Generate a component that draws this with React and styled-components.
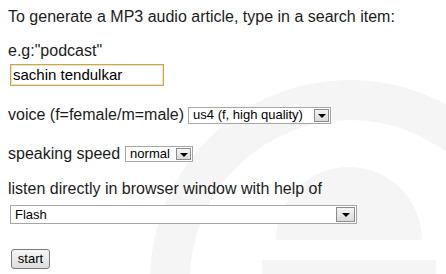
import React from "react";
import styled, { createGlobalStyle } from "styled-components";

const Global = createGlobalStyle`
  html, body { margin: 0; padding: 0; background: #fff; }
  body { width: 446px; height: 274px; overflow: hidden; }
`;

const Page = styled.div`
  position: relative;
  width: 446px;
  height: 274px;
  overflow: hidden;
  background: #ffffff;
  font-family: "Liberation Sans", Arial, sans-serif;
  color: #1c1c1c;
`;

const Watermark = styled.svg`
  position: absolute;
  left: 0;
  top: 0;
  z-index: 0;
`;

const Form = styled.div`
  position: relative;
  z-index: 1;
  display: flex;
  flex-direction: column;
  padding: 8px 0 0 8px;
`;

const Line = styled.div`
  font-size: 16px;
  line-height: 18px;
  height: 18px;
  white-space: nowrap;
  margin-top: ${(p) => p.$mt || 0}px;
`;

const Row = styled.div`
  display: flex;
  align-items: center;
  gap: ${(p) => p.$gap || 6}px;
  font-size: 16px;
  line-height: 18px;
  height: 18px;
  white-space: nowrap;
  margin-top: ${(p) => p.$mt || 0}px;
`;

const TextInput = styled.div`
  box-sizing: border-box;
  width: 154px;
  height: 22px;
  margin: ${(p) => p.$mt || 0}px 0 0 2px;
  border: 1px solid #c9a55a;
  box-shadow: inset 0 0 0 1px #f3e3b8;
  padding: 0 2px;
  font-size: 15px;
  line-height: 20px;
  color: #000;
  background: #fff;
`;

const SelectBox = styled.div`
  box-sizing: border-box;
  display: flex;
  align-items: center;
  width: ${(p) => p.$w}px;
  height: ${(p) => p.$h}px;
  margin: ${(p) => p.$m || "0"};
  border: 1px solid #a6a6a6;
  background: #fff;
  padding: 1px;
  font-size: 13px;
  color: #000;
`;

const SelectText = styled.span`
  flex: 1;
  padding-left: ${(p) => p.$pl || 3}px;
  line-height: 14px;
  overflow: hidden;
  white-space: nowrap;
`;

const ArrowBtn = styled.span`
  box-sizing: border-box;
  display: flex;
  align-items: center;
  justify-content: center;
  width: ${(p) => p.$bw}px;
  height: 100%;
  border: 1px solid #8c8c8c;
  background: linear-gradient(#f4f4f4, #d9d9d9);
`;

const Arrow = styled.span`
  width: 0;
  height: 0;
  border-left: 4px solid transparent;
  border-right: 4px solid transparent;
  border-top: 4px solid #000;
  margin-top: 1px;
`;

const Button = styled.button`
  box-sizing: border-box;
  width: 39px;
  height: 20px;
  margin: ${(p) => p.$mt || 0}px 0 0 3px;
  padding: 0;
  border: 1px solid #7a7a7a;
  border-radius: 3px;
  background: linear-gradient(#f6f6f6, #dddddd);
  font-family: "Liberation Sans", Arial, sans-serif;
  font-size: 13px;
  color: #000;
  line-height: 18px;
`;

function Select({ w, h, m, bw, children }) {
  return (
    <SelectBox $w={w} $h={h} $m={m}>
      <SelectText>{children}</SelectText>
      <ArrowBtn $bw={bw}>
        <Arrow />
      </ArrowBtn>
    </SelectBox>
  );
}

export default function App() {
  return (
    <>
      <Global />
      <Page>
        <Watermark width="446" height="274" viewBox="0 0 446 274">
          <path
            fillRule="evenodd"
            fill="#f5f5f5"
            d="M150 280 A200 200 0 1 1 550 280 A200 200 0 1 1 150 280 Z M190 280 A160 160 0 1 0 510 280 A160 160 0 1 0 190 280 Z"
          />
          <path fill="#f5f5f5" d="M276 240 A73 73 0 0 1 422 240 Z" />
          <rect x="262" y="260" width="174" height="14" fill="#f5f5f5" />
        </Watermark>
        <Form>
          <Line>To generate a MP3 audio article, type in a search item:</Line>
          <Line $mt={16}>e.g:"podcast"</Line>
          <TextInput $mt={4}>sachin tendulkar</TextInput>
          <Row $mt={20} $gap={4}>
            voice (f=female/m=male)
            <Select w={143} h={17} bw={15}>
              us4 (f, high quality)
            </Select>
          </Row>
          <Row $mt={21} $gap={5}>
            speaking speed
            <Select w={68} h={16} bw={15}>
              normal
            </Select>
          </Row>
          <Line $mt={17}>listen directly in browser window with help of</Line>
          <Select w={347} h={19} m="7px 0 0 2px" bw={19}>
            Flash
          </Select>
          <Button $mt={25}>start</Button>
        </Form>
      </Page>
    </>
  );
}
